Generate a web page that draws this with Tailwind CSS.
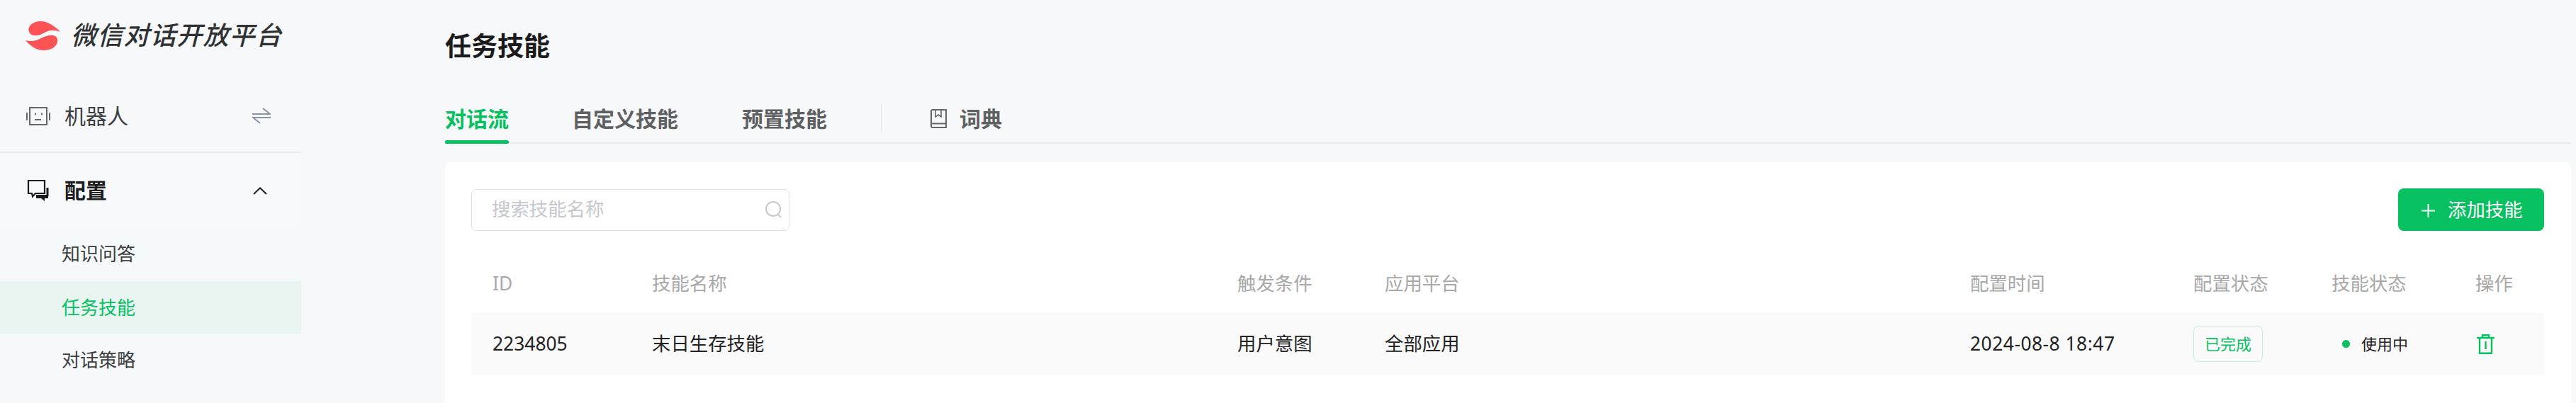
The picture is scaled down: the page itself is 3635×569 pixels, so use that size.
<!DOCTYPE html>
<html lang="zh-CN">
<head>
    <meta charset="UTF-8">
    <title>任务技能</title>
    <script src="https://cdn.jsdelivr.net/npm/@tailwindcss/browser@4"></script>
</head>
<body class="flex h-[569px] overflow-hidden bg-[#f7f8fa] font-['Noto_Sans','Noto_Sans_CJK_SC',sans-serif] text-[#333]">
    <aside class="w-[425px] shrink-0">
        <div class="flex h-[115px] items-start pl-[36px] pt-[30px]">
            <svg class="w-[49px] h-[41px]" viewBox="0 0 49 41" fill="#fe5355">
                <path d="M5 15C2 7 11 0 21 0C32 0 43 8 49 15C41 12 35 12 29 15C24 18 19 20 14 20C9 20 6 18 5 15Z"/>
                <path d="M0 27C8 29 14 28 22 24C28 21 34 19 39 20C44 21 46 25 45 29C44 36 36 41 26 41C14 41 5 33 0 27Z"/>
            </svg>
            <span class="ml-[15px] -mt-[1px] text-[36px] leading-[42px] italic font-medium tracking-[1.3px] whitespace-nowrap text-[#2f3133]">微信对话开放平台</span>
        </div>
        <div class="flex h-[101px] items-center border-b-2 border-[#e9ebec] pl-[37px] pb-[2px]">
            <svg class="w-[34px] h-[26px] shrink-0" viewBox="0 0 34 26" fill="none" stroke="#666" stroke-width="2">
                <rect x="5" y="1" width="24" height="24"/>
                <path d="M1 8v11M33 8v11M12 18h9"/>
                <path d="M12 10h2M21 10h2" stroke-width="2.5"/>
            </svg>
            <span class="ml-[20px] text-[30px] leading-[40px] text-[#3c3e40]">机器人</span>
            <svg class="ml-[175px] w-[26px] h-[23px]" viewBox="0 0 26 23" fill="none" stroke="#8a95a3" stroke-width="2">
                <path d="M0 9h25L15 1M26 14H1l10 8"/>
            </svg>
        </div>
        <div class="flex h-[106px] items-center bg-[#f7f9fa] pl-[38px]">
            <svg class="w-[32px] h-[32px] shrink-0" viewBox="0 0 32 32" fill="none" stroke="#1a1a1a" stroke-width="2.2">
                <path d="M2 2h23v18H12l-4 4.5L7 20H2z"/>
                <path d="M29 12v12" stroke-width="3"/>
                <path d="M13 22h17v5h-5v4l-5-4h-7z" fill="#1a1a1a" stroke="none"/>
            </svg>
            <span class="ml-[21px] text-[30px] leading-[40px] font-bold text-[#1c1c1c]">配置</span>
            <svg class="ml-[206px] w-[20px] h-[11px]" viewBox="0 0 20 11" fill="none" stroke="#222" stroke-width="2">
                <path d="M1 10l9-8.5L19 10"/>
            </svg>
        </div>
        <div class="flex h-[75px] items-center bg-[#f5f9fa] pl-[87px] pb-[3px] text-[26px] text-[#3c3e40]">知识问答</div>
        <div class="flex h-[74px] items-center bg-[#e8f5f1] pl-[87px] text-[26px] text-[#07c160]">任务技能</div>
        <div class="flex h-[75px] items-center pl-[87px] text-[26px] text-[#3c3e40]">对话策略</div>
    </aside>
    <main class="flex min-w-0 flex-1 flex-col pl-[203px] pr-[7px] pt-[44px]">
        <h1 class="text-[37px] leading-[42px] font-bold text-[#1b1b1b]">任务技能</h1>
        <div class="mt-[47px] flex h-[70px] shrink-0 items-center border-b-2 border-[#e8eaed] text-[30px] font-bold text-[#5f6062]">
            <div class="relative flex h-full items-center text-[#07c160]">
                对话流
                <span class="absolute -bottom-[2px] left-0 right-0 h-[5px] rounded-full bg-[#07c160]"></span>
            </div>
            <div class="ml-[89px]">自定义技能</div>
            <div class="ml-[90px]">预置技能</div>
            <div class="ml-[76px] h-[40px] w-px bg-[#e3e5e8]"></div>
            <svg class="ml-[69px] w-[23px] h-[27px]" viewBox="0 0 23 27" fill="none" stroke="#666" stroke-width="2">
                <path d="M3 1h19v25H3a2 2 0 0 1-2-2V3a2 2 0 0 1 2-2zM1 20.5h21"/>
                <path d="M7 1v10l4-3 4 3V1" stroke-width="1.6"/>
            </svg>
            <div class="ml-[18px]">词典</div>
        </div>
        <section class="mt-[26px] flex-1 rounded-t-[8px] bg-white pl-[37px] pr-[38px] pt-[37px]">
            <div class="flex h-[60px] items-center justify-between">
                <div class="flex h-[59px] w-[449px] items-center justify-between rounded-[7px] border border-[#dfe1e6] pl-[28px] pr-[9px]">
                    <span class="text-[26.4px] text-[#c5c8ce]">搜索技能名称</span>
                    <svg class="w-[24px] h-[24px]" viewBox="0 0 24 24" fill="none" stroke="#c5c9d0" stroke-width="2">
                        <circle cx="11" cy="11" r="10"/>
                        <path d="M18 19l4 4"/>
                    </svg>
                </div>
                <button class="flex h-[60px] w-[206px] items-center rounded-[8px] bg-[#07c160] pl-[33px] pt-[2px] text-[26.4px] text-white">
                    <svg class="w-[19px] h-[19px]" viewBox="0 0 19 19" fill="none" stroke="#fff" stroke-width="2"><path d="M9.5 0v19M0 9.5h19"/></svg>
                    <span class="ml-[18px]">添加技能</span>
                </button>
            </div>
            <div class="mt-[36px] grid h-[80px] grid-cols-[225px_826px_208px_826px_315px_195px_203px_1fr] items-center pb-[2px] pl-[30px] text-[26.4px] text-[#a8a8a8]">
                <div>ID</div>
                <div>技能名称</div>
                <div>触发条件</div>
                <div>应用平台</div>
                <div>配置时间</div>
                <div>配置状态</div>
                <div>技能状态</div>
                <div>操作</div>
            </div>
            <div class="grid h-[87px] grid-cols-[225px_826px_208px_826px_315px_195px_203px_1fr] items-center bg-[#fafafa] pl-[30px] text-[26.4px] text-[#222]">
                <div>2234805</div>
                <div>末日生存技能</div>
                <div>用户意图</div>
                <div>全部应用</div>
                <div class="tracking-[0.5px]">2024-08-8 18:47</div>
                <div>
                    <span class="flex h-[51px] w-[98px] items-center justify-center rounded-[8px] border border-[#c3f0d8] text-[22px] text-[#07c160]">已完成</span>
                </div>
                <div class="flex items-center pl-[15px] text-[22px]">
                    <span class="h-[11px] w-[11px] rounded-full bg-[#07c160]"></span>
                    <span class="ml-[16px]">使用中</span>
                </div>
                <div class="pl-[2px]">
                    <svg class="w-[25px] h-[28px]" viewBox="0 0 25 28" fill="none" stroke="#07c160" stroke-width="2.4">
                        <path d="M0 5h25M8 5V1.2h9V5M4 5v21.8h17V5M12.5 10v11"/>
                    </svg>
                </div>
            </div>
        </section>
    </main>
</body>
</html>
